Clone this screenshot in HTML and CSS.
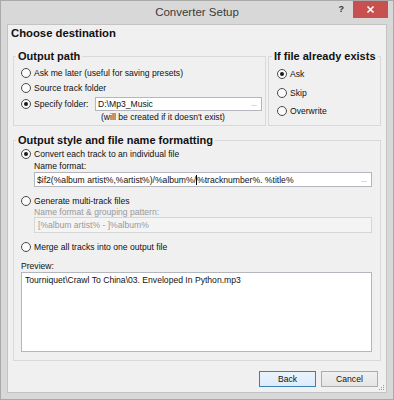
FILE: index.html
```html
<!DOCTYPE html>
<html lang="en">
  <head>
    <meta charset="UTF-8" />
    <meta name="viewport" content="width=device-width, initial-scale=1.0" />
    <title>Converter Setup</title>
    <link rel="stylesheet" href="styles.css">
  </head>
  <body>
    <div class="window">
      <div class="titlebar">
        <span></span>
        <span class="title">Converter Setup</span>
        <div class="controls">
          <span class="help">?</span>
          <span class="close">
            <svg width="9" height="9" viewBox="0 0 9 9">
              <path d="M1.5 1.5 L7.5 7.5 M7.5 1.5 L1.5 7.5" stroke="#fff" stroke-width="1.6" />
            </svg>
          </span>
        </div>
      </div>
      <div class="client">
        <h1 class="heading">Choose destination</h1>
        <div class="top-groups">
          <fieldset class="group group-path">
            <legend>Output path</legend>
            <label class="row h15"><span class="radio"></span>Ask me later (useful for saving presets)</label>
            <label class="row h16"><span class="radio"></span>Source track folder</label>
            <div class="row h15">
              <label class="folder-label"><span class="radio checked"></span>Specify folder:</label>
              <div class="field folder-field">D:\Mp3_Music<span class="dots">...</span></div>
            </div>
            <p class="note">(will be created if it doesn't exist)</p>
          </fieldset>
          <fieldset class="group group-exists">
            <legend>If file already exists</legend>
            <label class="row h18"><span class="radio checked"></span>Ask</label>
            <label class="row h19"><span class="radio"></span>Skip</label>
            <label class="row h18"><span class="radio"></span>Overwrite</label>
          </fieldset>
        </div>
        <fieldset class="group group-style">
          <legend>Output style and file name formatting</legend>
          <label class="row h12"><span class="radio checked"></span>Convert each track to an individual file</label>
          <p class="sub-label">Name format:</p>
          <div class="field name-field">$if2(%album artist%,%artist%)/%album%/<span class="caret"></span>%tracknumber%. %title%<span class="dots">...</span></div>
          <label class="row h12 spaced"><span class="radio"></span>Generate multi-track files</label>
          <p class="sub-label disabled short">Name format &amp; grouping pattern:</p>
          <div class="field group-field disabled">[%album artist% - ]%album%</div>
          <label class="row h12 spaced"><span class="radio"></span>Merge all tracks into one output file</label>
          <p class="preview-label">Preview:</p>
          <div class="preview">Tourniquet\Crawl To China\03. Enveloped In Python.mp3</div>
        </fieldset>
        <div class="buttons">
          <button class="btn default">Back</button>
          <button class="btn">Cancel</button>
        </div>
        <svg class="grip" width="6" height="6" viewBox="0 0 6 6">
          <rect x="4" y="0" width="1" height="1" fill="#9a9a9a" />
          <rect x="2" y="2" width="1" height="1" fill="#9a9a9a" />
          <rect x="4" y="2" width="1" height="1" fill="#9a9a9a" />
          <rect x="0" y="4" width="1" height="1" fill="#9a9a9a" />
          <rect x="2" y="4" width="1" height="1" fill="#9a9a9a" />
          <rect x="4" y="4" width="1" height="1" fill="#9a9a9a" />
        </svg>
      </div>
    </div>
  </body>
</html>
```
FILE: styles.css
```css
body {
  margin: 0;
  font-family: "Liberation Sans", Arial, sans-serif;
  font-size: 8.6px;
  color: #111;
}
.window {
  width: 394px;
  height: 400px;
  box-sizing: border-box;
  border: 1px solid #a9a9a9;
  background-color: #d8d8d8;
  display: flex;
  flex-direction: column;
}
.titlebar {
  height: 23px;
  display: grid;
  grid-template-columns: 1fr auto 1fr;
  align-items: start;
}
.title {
  font-size: 11.5px;
  line-height: 22px;
  color: #3a3a3a;
}
.controls {
  display: flex;
  justify-content: flex-end;
  align-items: start;
  margin-right: 5px;
}
.help {
  font-size: 9px;
  font-weight: bold;
  color: #333;
  line-height: 17px;
  margin-right: 9px;
}
.close {
  width: 35px;
  height: 17px;
  background-color: #c8504f;
  display: flex;
  align-items: center;
  justify-content: center;
}
.client {
  flex: 1;
  margin: 0 6px 6px 6px;
  border: 1px solid #c3c3c3;
  background-color: #f0f0f0;
  padding: 1px 5px 0 5px;
  position: relative;
}
.heading {
  margin: 0 0 0 -2px;
  font-size: 11.3px;
  line-height: 14px;
  color: #111;
}
.top-groups {
  display: flex;
  gap: 2px;
  margin-top: 10px;
}
.group {
  margin: 0;
  border: 1px solid #d9d9d9;
  min-width: 0;
}
.group legend {
  font-size: 11px;
  font-weight: bold;
  line-height: 12px;
  padding: 0 2px;
  margin-left: -5px;
  white-space: nowrap;
}
.group-path {
  width: 253px;
  box-sizing: border-box;
  padding: 3px 3px 2px 7px;
}
.group-exists {
  flex: 1;
  padding: 3px 0 2px 8px;
}
.group-style {
  margin-top: 8px;
  padding: 2px 8px 8px 7px;
}
.row {
  display: flex;
  align-items: center;
}
.h12 { height: 12px; }
.h15 { height: 15px; }
.h16 { height: 16px; }
.h18 { height: 18px; }
.h19 { height: 19px; }
.spaced {
  margin-top: 8px;
}
.radio {
  width: 8px;
  height: 8px;
  border: 1px solid #4a4a4a;
  border-radius: 50%;
  background-color: #fbfbfb;
  margin-right: 3px;
  display: flex;
  align-items: center;
  justify-content: center;
  flex-shrink: 0;
}
.radio.checked::after {
  content: "";
  width: 4px;
  height: 4px;
  border-radius: 50%;
  background-color: #1a1a1a;
}
.folder-label {
  width: 74px;
  display: flex;
  align-items: center;
}
.field {
  position: relative;
  box-sizing: border-box;
  background-color: #fff;
  border: 1px solid #b3b6bd;
  padding-left: 2px;
  display: flex;
  align-items: center;
  white-space: nowrap;
}
.folder-field {
  width: 167px;
  height: 14px;
}
.dots {
  margin-left: auto;
  margin-right: 4px;
  color: #888;
  font-size: 7px;
}
.note {
  margin: 0 0 0 80px;
  height: 12px;
  line-height: 12px;
}
.sub-label {
  margin: 0 0 0 13px;
  height: 12px;
  line-height: 12px;
}
.sub-label.short {
  height: 10px;
  line-height: 10px;
}
.name-field {
  margin-left: 13px;
  height: 15px;
}
.caret {
  width: 1px;
  height: 10px;
  background-color: #000;
}
.group-field {
  margin-left: 13px;
  height: 16px;
  padding-left: 3px;
}
.disabled {
  color: #9a9a9a;
}
.field.disabled {
  background-color: #f4f4f4;
  border-color: #d6d6d6;
}
.preview-label {
  margin: 8px 0 0 0;
  height: 11px;
  line-height: 11px;
}
.preview {
  height: 80px;
  box-sizing: border-box;
  background-color: #fff;
  border: 1px solid #b3b6bd;
  padding: 1px 3px;
  line-height: 12px;
}
.buttons {
  display: flex;
  justify-content: flex-end;
  gap: 5px;
  margin-top: 10px;
  padding-right: 3px;
}
.btn {
  width: 57px;
  height: 16px;
  padding: 0;
  font-family: "Liberation Sans", Arial, sans-serif;
  font-size: 8.6px;
  color: #111;
  border: 1px solid #acacac;
  background: linear-gradient(#f0f0f0, #e5e5e5);
}
.btn.default {
  border-color: #3c7fb1;
  background: linear-gradient(#eaf3fb, #dcecfc);
}
.grip {
  position: absolute;
  right: 1px;
  bottom: 1px;
}
```
